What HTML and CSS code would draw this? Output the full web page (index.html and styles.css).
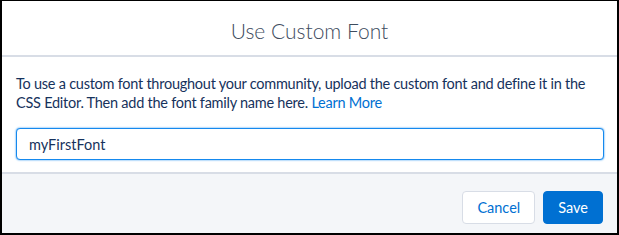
FILE: index.html
```html
<!DOCTYPE html>
<html lang="en">
<head>
<meta charset="UTF-8">
<meta name="viewport" content="width=device-width">
<title>Use Custom Font</title>
<link rel="stylesheet" href="styles.css">
</head>
<body>
<div class="modal">
  <div class="modal-header">
    <h2>Use Custom Font</h2>
  </div>
  <div class="modal-body">
    <p>To use a custom font throughout your community, upload the custom font and define it in the CSS Editor. Then add the font family name here. <a href="#">Learn More</a></p>
    <input type="text" class="font-input" value="myFirstFont">
  </div>
  <div class="modal-footer">
    <button class="btn btn-neutral">Cancel</button>
    <button class="btn btn-brand">Save</button>
  </div>
</div>
</body>
</html>
```

FILE: styles.css
```css
body {
  margin: 0;
  font-family: Lato, "Open Sans", Arial, sans-serif;
  background: #fff;
}
.modal {
  width: 619px;
  height: 235px;
  box-sizing: border-box;
  border: 2px solid #000;
  border-top-width: 1px;
  display: flex;
  flex-direction: column;
  background: #fff;
}
.modal-header {
  height: 56px;
  box-sizing: border-box;
  padding-top: 5px;
  border-bottom: 2px solid #d8dde6;
  display: flex;
  align-items: center;
  justify-content: center;
}
.modal-header h2 {
  margin: 0;
  font-size: 21px;
  font-weight: 300;
  color: #3e4c5e;
}
.modal-body {
  padding: 17px 13px 0 14px;
  flex: 1;
}
.modal-body p {
  margin: 0 0 16px;
  font-size: 14.5px;
  letter-spacing: -0.25px;
  line-height: 19px;
  color: #16325c;
}
.modal-body a {
  color: #0070d2;
  text-decoration: none;
}
.font-input {
  display: block;
  width: 100%;
  height: 32px;
  box-sizing: border-box;
  border: 1px solid #1589ee;
  box-shadow: 0 0 2px #1589ee;
  border-radius: 4px;
  padding: 0 12px;
  font-family: inherit;
  font-size: 14.5px;
  color: #16325c;
  outline: none;
}
.modal-footer {
  height: 61px;
  box-sizing: border-box;
  border-top: 2px solid #d8dde6;
  background: #f4f6f9;
  display: flex;
  justify-content: flex-end;
  align-items: flex-start;
  gap: 8px;
  padding: 17px 14px 0 0;
}
.btn {
  height: 33px;
  border-radius: 4px;
  padding: 0 14px;
  font-family: inherit;
  font-size: 14.5px;
}
.btn-neutral {
  background: #fff;
  border: 1px solid #d8dde6;
  color: #0070d2;
}
.btn-brand {
  background: #0070d2;
  border: 1px solid #0070d2;
  color: #fff;
}
```
